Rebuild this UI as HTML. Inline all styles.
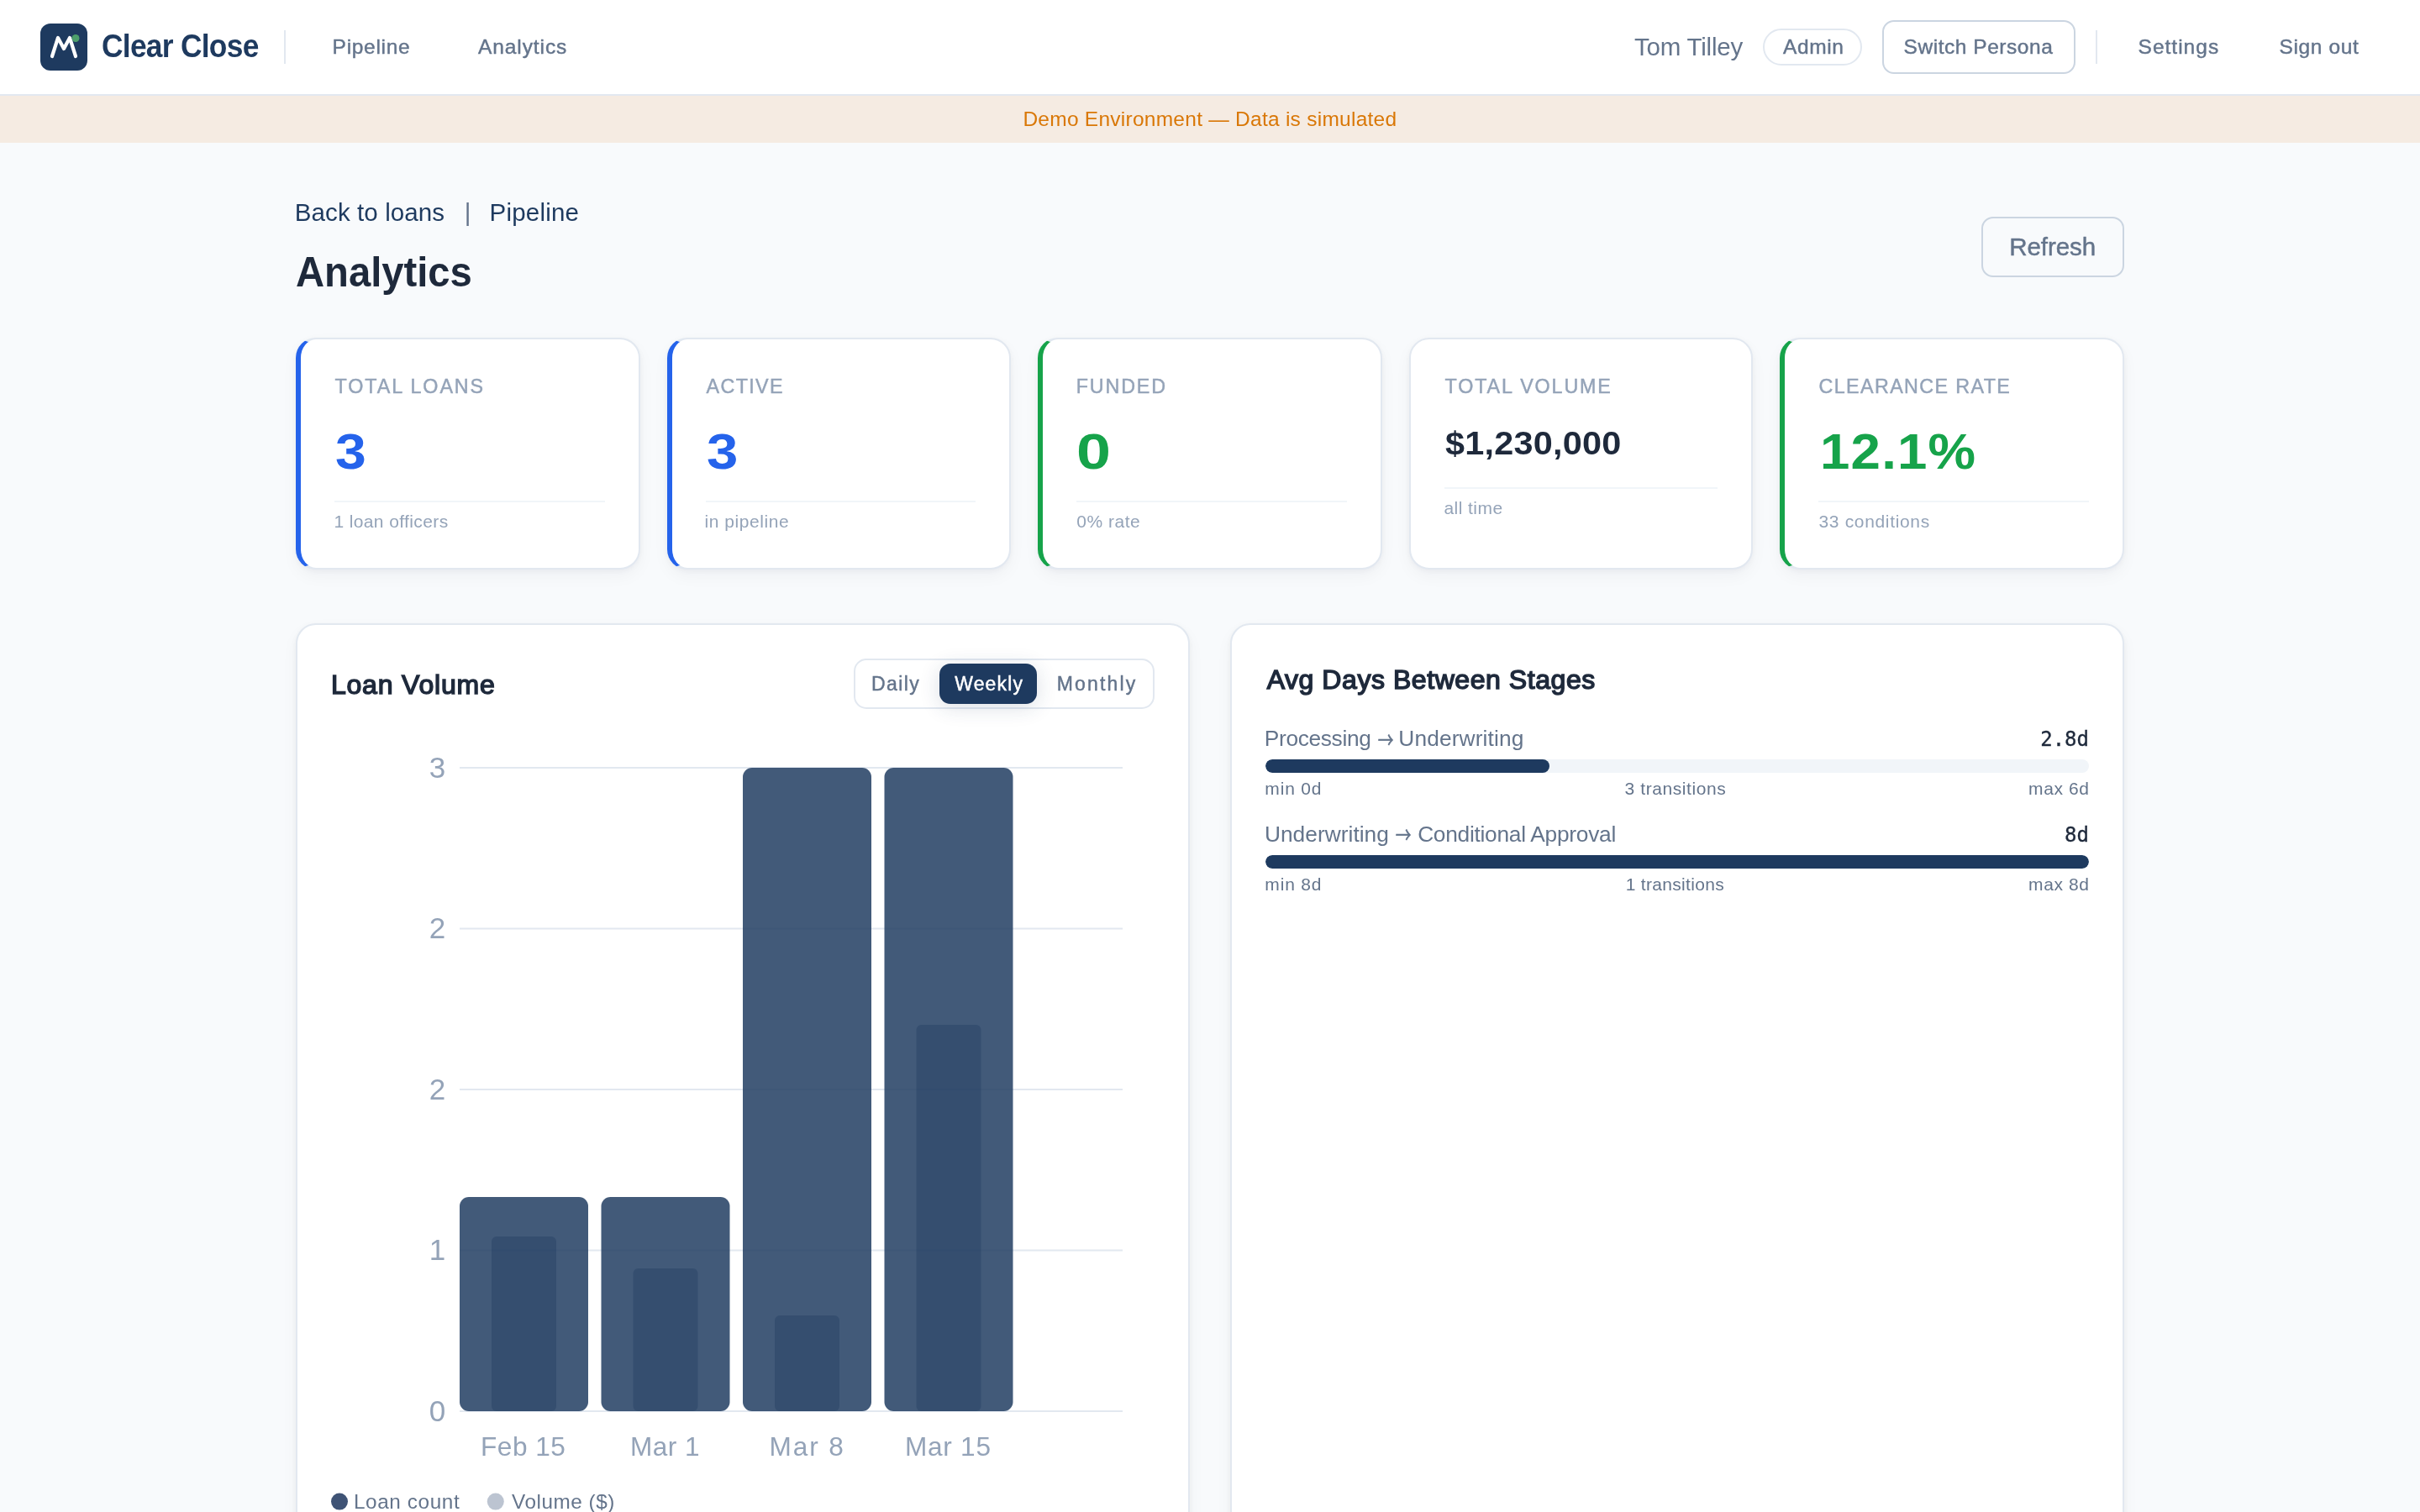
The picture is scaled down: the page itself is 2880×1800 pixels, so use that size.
<!DOCTYPE html>
<html lang="en">
<head>
<meta charset="utf-8">
<title>Clear Close — Analytics</title>
<style>
*{box-sizing:border-box;margin:0;padding:0}
html,body{width:2880px;height:1800px;overflow:hidden;background:#f8fafc}
body{will-change:transform;font-family:"Liberation Sans",Arial,sans-serif;color:#1e293b;position:relative}
a{color:inherit;text-decoration:none}
.abs{position:absolute;white-space:nowrap;line-height:1;font-weight:400}
header.top{position:absolute;left:0;top:0;width:2880px;height:114px;background:#fff;border-bottom:2px solid #e2e8f0}
.logo{position:absolute;left:48px;top:28px;width:56px;height:56px;border-radius:12px;background:#1e3a5f}
.logo svg{display:block;width:56px;height:56px}
#brand{font-weight:700;color:#1e3a5f}
.vsep{position:absolute;width:2px;background:#e2e8f0}
.nav .abs{color:#64748b}
.med{-webkit-text-stroke:0.45px currentColor}
.pill{position:absolute;left:2098px;top:34px;width:118px;height:44px;border:2px solid #e2e8f0;border-radius:22px;background:#fff}
.btn-persona{position:absolute;left:2240px;top:24px;width:230px;height:64px;border:2px solid #cbd5e1;border-radius:14px;background:#fff}
.banner{position:absolute;left:0;top:114px;width:2880px;height:56px;background:#f5ebe2;color:#d97706}
.crumbs .abs{color:#1e3a5f}
#bar{color:#64748b}
h1{font-weight:700!important;color:#1e293b}
.btn-refresh{position:absolute;left:2358px;top:258px;width:170px;height:72px;border:2px solid #cbd5e1;border-radius:14px;color:#64748b}
.card{position:absolute;top:402px;width:409.6px;height:276px;background:#fff;border:2px solid #e2e8f0;border-radius:24px;box-shadow:0 2px 6px rgba(15,23,42,.04),0 8px 20px rgba(15,23,42,.04)}
.card.blue{border-left:6px solid #2563eb}
.card.green{border-left:6px solid #16a34a}
.card .lbl{color:#94a3b8}
.card .val{font-weight:700;transform-origin:0 50%}
.card .rule{position:absolute;left:40px;right:40px;top:192px;height:2px;background:#f1f5f9}
.card .sub{color:#94a3b8}
.blue .val{color:#2563eb}.green .val{color:#16a34a}
.panel{position:absolute;top:742px;background:#fff;border:2px solid #e2e8f0;border-radius:24px;box-shadow:0 2px 6px rgba(15,23,42,.04),0 8px 20px rgba(15,23,42,.04);height:1200px}
.panel h2{font-weight:400;color:#1e293b;-webkit-text-stroke:1.5px #1e293b}
.seg{position:absolute;left:662px;top:40px;width:358px;height:60px;border:2px solid #e2e8f0;border-radius:15px;background:#fff;color:#64748b}
.seg .on{position:absolute;left:100px;top:4px;width:116px;height:48px;border-radius:13px;background:#1e3a5f;box-shadow:0 4px 24px rgba(30,58,95,.16);color:#fff}
.track{position:absolute;left:40px;width:980px;height:16px;border-radius:8px;background:#f1f5f9;overflow:hidden}
.track i{display:block;height:16px;border-radius:8px;background:#1e3a5f}
.row-l{color:#64748b}
.arr{position:absolute;width:0;height:0}
.arr b{position:absolute;left:0;bottom:-4px;font:400 27px/1 "Noto Sans CJK SC",sans-serif;letter-spacing:0;-webkit-text-stroke:0.5px #64748b;transform:translateX(-50%) scaleX(.69)}
.row-v{font-family:"DejaVu Sans Mono","Liberation Mono",monospace;font-size:24px;color:#1e293b;-webkit-text-stroke:0.35px #1e293b}
.row-s{color:#64748b}
</style>
</head>
<body>

<header class="top">
  <div class="logo">
    <svg viewBox="0 0 56 56"><path d="M14 39 L21 17 L28 30 L35 17 L42 39" fill="none" stroke="#fff" stroke-width="4.2" stroke-linecap="round" stroke-linejoin="round"/><circle cx="42" cy="17.5" r="4.5" fill="#4d9f6b"/></svg>
  </div>
  <div id="brand" class="abs" style="left:120.78px;top:35.83px;font-size:38.00px;letter-spacing:-0.769px;transform:scaleX(0.9300);transform-origin:0 50%">Clear Close</div>
  <div class="vsep" style="left:338px;top:36px;height:40px"></div>
  <nav class="nav">
    <a id="navPipe" href="#" class="abs med" style="left:395.60px;top:43.76px;font-size:24.50px;letter-spacing:0.704px">Pipeline</a>
    <a id="navAna" href="#" class="abs med" style="left:569.06px;top:43.76px;font-size:24.50px;letter-spacing:0.899px">Analytics</a>
    <span id="user" class="abs" style="left:1944.89px;top:40.79px;font-size:29.54px;letter-spacing:-0.204px">Tom Tilley</span>
    <div class="pill"><span id="admin" class="abs med" style="left:21.93px;top:7.96px;font-size:24.50px;letter-spacing:0.655px">Admin</span></div>
    <div class="btn-persona"><span id="persona" class="abs med" style="left:23.57px;top:17.96px;font-size:24.50px;letter-spacing:0.540px">Switch Persona</span></div>
    <div class="vsep" style="left:2494px;top:36px;height:40px"></div>
    <a id="settings" href="#" class="abs med" style="left:2544.57px;top:43.96px;font-size:24.50px;letter-spacing:1.007px">Settings</a>
    <a id="signout" href="#" class="abs med" style="left:2712.57px;top:43.96px;font-size:24.50px;letter-spacing:0.624px">Sign out</a>
  </nav>
</header>

<div class="banner"><p id="banner" class="abs" style="left:1217.41px;top:15.56px;font-size:24.50px;letter-spacing:0.256px">Demo Environment — Data is simulated</p></div>

<main>
  <div class="crumbs">
    <a id="back" href="#" class="abs" style="left:350.82px;top:238.49px;font-size:29.54px;letter-spacing:0.082px">Back to loans</a>
    <span id="bar" class="abs" style="left:552.78px;top:238.49px;font-size:29.54px;letter-spacing:0.000px">|</span>
    <a id="crumb" href="#" class="abs" style="left:582.50px;top:238.49px;font-size:29.54px;letter-spacing:0.199px">Pipeline</a>
  </div>
  <h1 id="h1" class="abs" style="left:351.65px;top:298.55px;font-size:49.20px;letter-spacing:-0.022px;transform:scaleX(0.9600);transform-origin:0 50%">Analytics</h1>
  <div class="btn-refresh"><span id="refresh" class="abs med" style="left:31.30px;top:18.99px;font-size:29.54px;letter-spacing:-0.099px">Refresh</span></div>

  <section class="card blue" style="left:352px">
    <div id="l1" class="abs lbl med" style="left:40.58px;top:44.88px;font-size:23.30px;letter-spacing:1.900px">TOTAL LOANS</div>
    <div id="v1" class="abs val" style="left:41.08px;top:103.81px;font-size:60.00px;letter-spacing:0.000px;transform:scaleX(1.1023)">3</div>
    <div class="rule"></div>
    <div id="s1" class="abs sub" style="left:39.41px;top:206.22px;font-size:21.00px;letter-spacing:0.386px">1 loan officers</div>
  </section>
  <section class="card blue" style="left:793.6px">
    <div id="l2" class="abs lbl med" style="left:40.90px;top:44.88px;font-size:23.30px;letter-spacing:1.392px">ACTIVE</div>
    <div id="v2" class="abs val" style="left:41.09px;top:103.81px;font-size:60.00px;letter-spacing:0.000px;transform:scaleX(1.1188)">3</div>
    <div class="rule"></div>
    <div id="s2" class="abs sub" style="left:38.90px;top:206.22px;font-size:21.00px;letter-spacing:0.557px">in pipeline</div>
  </section>
  <section class="card green" style="left:1235.2px">
    <div id="l3" class="abs lbl med" style="left:39.56px;top:44.88px;font-size:23.30px;letter-spacing:1.842px">FUNDED</div>
    <div id="v3" class="abs val" style="left:39.33px;top:103.81px;font-size:60.00px;letter-spacing:0.000px;transform:scaleX(1.2268)">0</div>
    <div class="rule"></div>
    <div id="s3" class="abs sub" style="left:40.15px;top:206.22px;font-size:21.00px;letter-spacing:0.498px">0% rate</div>
  </section>
  <section class="card" style="left:1676.8px">
    <div id="l4" class="abs lbl med" style="left:40.78px;top:44.88px;font-size:23.30px;letter-spacing:1.853px">TOTAL VOLUME</div>
    <div id="v4" class="abs val" style="color:#1e293b;left:41.24px;top:104.63px;font-size:38.00px;letter-spacing:0.213px;transform:scaleX(1.0900)">$1,230,000</div>
    <div class="rule" style="top:176px"></div>
    <div id="s4" class="abs sub" style="left:39.71px;top:190.02px;font-size:21.00px;letter-spacing:0.436px">all time</div>
  </section>
  <section class="card green" style="left:2118.4px">
    <div id="l5" class="abs lbl med" style="left:40.10px;top:44.88px;font-size:23.30px;letter-spacing:1.395px">CLEARANCE RATE</div>
    <div id="v5" class="abs val" style="left:42.10px;top:103.61px;font-size:60.00px;letter-spacing:1.141px;transform:scaleX(1.0600)">12.1%</div>
    <div class="rule"></div>
    <div id="s5" class="abs sub" style="left:40.12px;top:206.22px;font-size:21.00px;letter-spacing:0.656px">33 conditions</div>
  </section>

  <section class="panel" style="left:352px;width:1064px">
    <h2 id="lv" class="abs" style="left:39.91px;top:55.11px;font-size:32.00px;letter-spacing:0.812px">Loan Volume</h2>
    <div class="seg">
      <span id="daily" class="abs med" style="left:19.07px;top:16.53px;font-size:23.00px;letter-spacing:1.363px">Daily</span>
      <div class="on"><span id="weekly" class="abs med" style="left:18.26px;top:12.53px;font-size:23.00px;letter-spacing:1.145px">Weekly</span></div>
      <span id="monthly" class="abs med" style="left:239.84px;top:16.53px;font-size:23.00px;letter-spacing:2.131px">Monthly</span>
    </div>
    <svg style="position:absolute;left:0;top:0" width="1060" height="1056" viewBox="354 744 1060 1056" font-family="Liberation Sans, Arial, sans-serif">
      <g stroke="#e2e8f0" stroke-width="2">
        <line x1="547" x2="1336" y1="914" y2="914"/>
        <line x1="547" x2="1336" y1="1105.5" y2="1105.5"/>
        <line x1="547" x2="1336" y1="1297" y2="1297"/>
        <line x1="547" x2="1336" y1="1488.5" y2="1488.5"/>
        <line x1="547" x2="1336" y1="1680" y2="1680"/>
      </g>
      <g fill="#94a3b8" font-size="35" text-anchor="end">
        <text x="530.3" y="925.7">3</text>
        <text x="530.3" y="1117.2">2</text>
        <text x="530.3" y="1308.7">2</text>
        <text x="530.3" y="1500.2">1</text>
        <text x="530.3" y="1691.6">0</text>
      </g>
      <g fill="#1e3a5f" fill-opacity="0.84">
        <rect x="547" y="1425" width="153" height="255" rx="11"/>
        <rect x="715.5" y="1425" width="153" height="255" rx="11"/>
        <rect x="884" y="914" width="153" height="766" rx="11"/>
        <rect x="1052.5" y="914" width="153" height="766" rx="11"/>
      </g>
      <g fill="#1e3a5f" fill-opacity="0.35">
        <rect x="585" y="1472" width="77" height="208" rx="6"/>
        <rect x="753.5" y="1510" width="77" height="170" rx="6"/>
        <rect x="922" y="1566" width="77" height="114" rx="6"/>
        <rect x="1090.5" y="1220" width="77" height="460" rx="6"/>
      </g>
      <g fill="#94a3b8">
        <text id="xl1" x="572.06" y="1733" font-size="31.6" letter-spacing="0.499">Feb 15</text>
        <text id="xl2" x="749.94" y="1733" font-size="31.6" letter-spacing="0.446">Mar 1</text>
        <text id="xl3" x="915.56" y="1733" font-size="31.6" letter-spacing="1.903">Mar 8</text>
        <text id="xl4" x="1076.94" y="1733" font-size="31.6" letter-spacing="0.744">Mar 15</text>
      </g>
      <circle cx="404" cy="1787.6" r="10" fill="#3f5375"/>
      <circle cx="589.8" cy="1787.6" r="10" fill="#bcc4d1"/>
      <g fill="#64748b">
        <text id="lg1" x="421.00" y="1795.8" font-size="24.3" letter-spacing="0.603">Loan count</text>
        <text id="lg2" x="609.08" y="1795.8" font-size="24.3" letter-spacing="0.524">Volume ($)</text>
      </g>
    </svg>
  </section>

  <section class="panel" style="left:1464px;width:1064px">
    <h2 id="avg" class="abs" style="left:41.67px;top:49.21px;font-size:32.00px;letter-spacing:0.561px">Avg Days Between Stages</h2>

    <div class="row-l"><span id="r1a" class="abs" style="left:38.80px;top:122.24px;font-size:26.30px;letter-spacing:-0.341px">Processing</span><span class="arr" style="left:182.5px;top:144.5px"><b>→</b></span><span id="r1b" class="abs" style="left:198.37px;top:122.24px;font-size:26.30px;letter-spacing:0.117px">Underwriting</span></div>
    <div class="abs row-v" style="right:40px;top:124px">2.8d</div>
    <div class="track" style="top:160px"><i style="width:338px"></i></div>
    <div id="m1" class="abs row-s" style="left:39.33px;top:184.22px;font-size:21.00px;letter-spacing:0.831px">min 0d</div>
    <div id="t1" class="abs row-s" style="left:467.60px;top:184.22px;font-size:21.00px;letter-spacing:0.576px">3 transitions</div>
    <div id="x1" class="abs row-s" style="left:948.10px;top:184.22px;font-size:21.00px;letter-spacing:0.572px">max 6d</div>

    <div class="row-l"><span id="r2a" class="abs" style="left:38.89px;top:236.04px;font-size:26.30px;letter-spacing:0.038px">Underwriting</span><span class="arr" style="left:203.7px;top:258.3px"><b>→</b></span><span id="r2b" class="abs" style="left:221.15px;top:236.04px;font-size:26.30px;letter-spacing:-0.269px">Conditional Approval</span></div>
    <div class="abs row-v" style="right:40px;top:238px">8d</div>
    <div class="track" style="top:274px"><i style="width:100%"></i></div>
    <div id="m2" class="abs row-s" style="left:39.33px;top:298.02px;font-size:21.00px;letter-spacing:0.831px">min 8d</div>
    <div id="t2" class="abs row-s" style="left:468.70px;top:298.02px;font-size:21.00px;letter-spacing:0.318px">1 transitions</div>
    <div id="x2" class="abs row-s" style="left:948.10px;top:298.02px;font-size:21.00px;letter-spacing:0.572px">max 8d</div>
  </section>
</main>

</body>
</html>
